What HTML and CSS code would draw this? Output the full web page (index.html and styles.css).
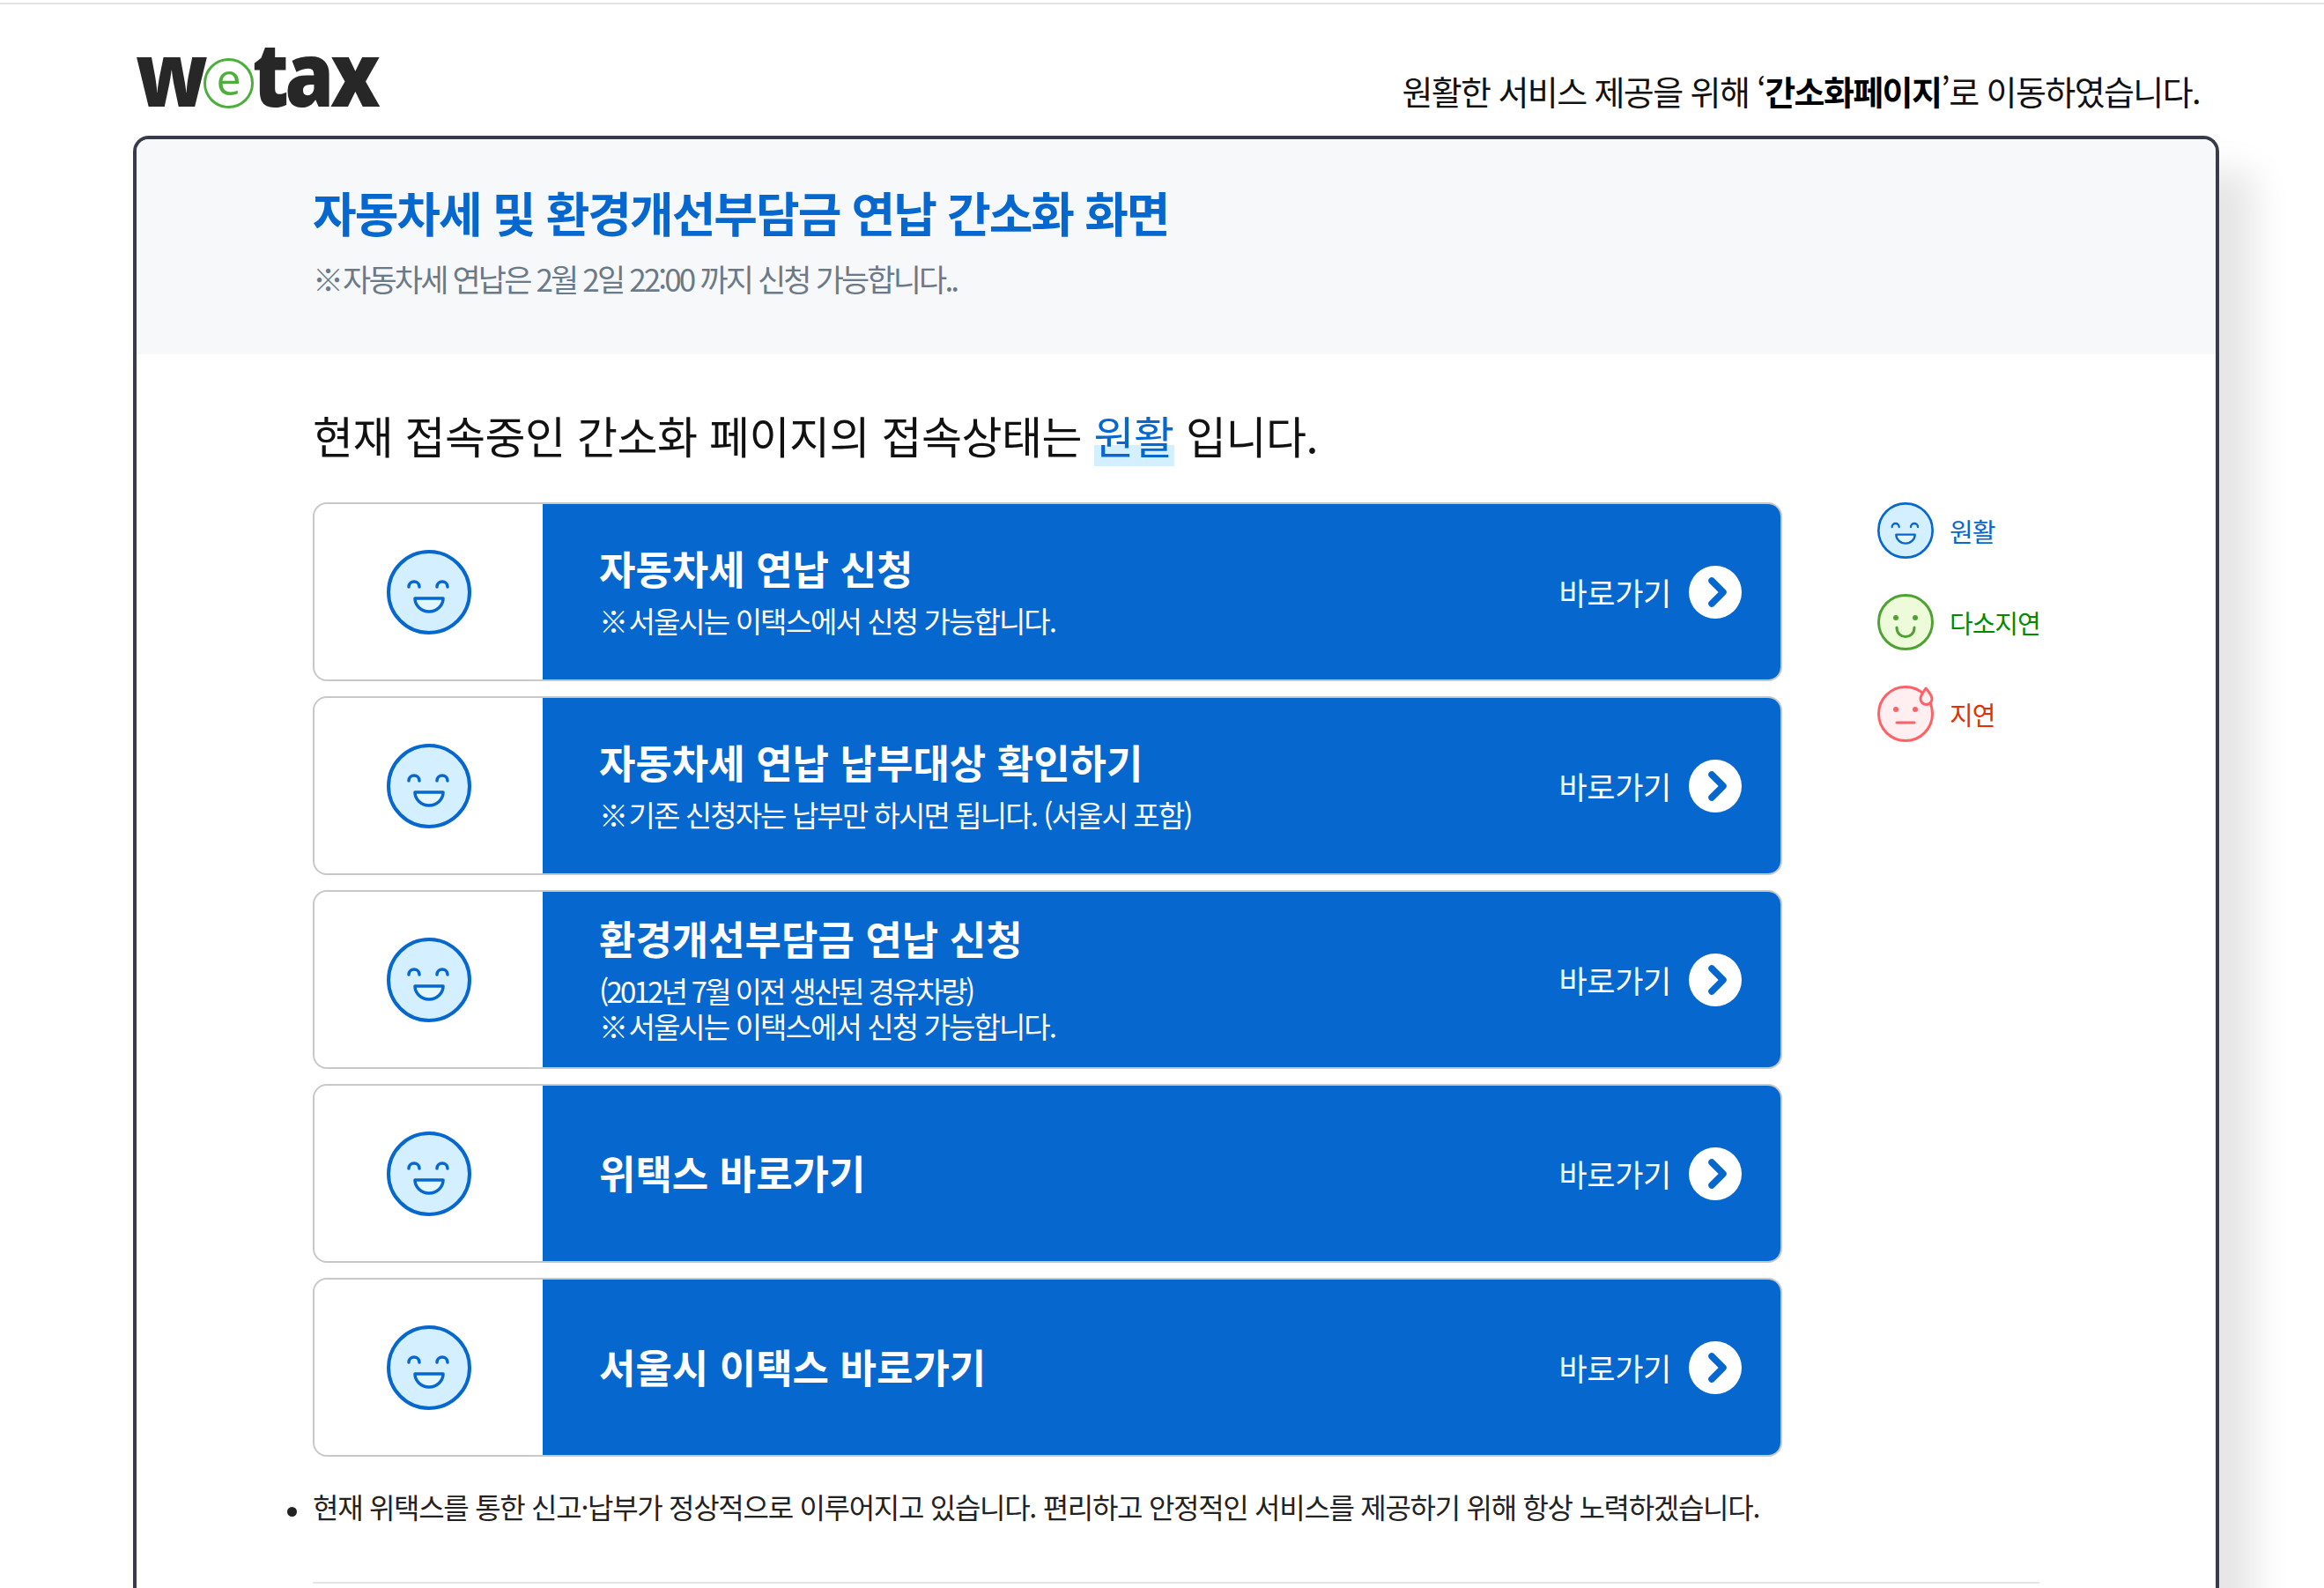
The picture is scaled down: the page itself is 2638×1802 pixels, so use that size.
FILE: index.html
```html
<!DOCTYPE html>
<html lang="ko">
<head>
<meta charset="utf-8">
<title>wetax</title>
<link rel="stylesheet" href="styles.css">
</head>
<body>
<div class="page">
  <header class="top">
    <div class="logo"><span class="logo-text">w</span><svg class="logo-e" viewBox="0 0 57 57"><circle cx="28.500" cy="28.500" r="27" fill="#fff" stroke="#4caf3c" stroke-width="3"/><text x="28.500" y="42" text-anchor="middle" class="logo-e-text">e</text></svg><span class="logo-text">tax</span></div>
    <p class="notice">원활한 서비스 제공을 위해 ‘<b>간소화페이지</b>’로 이동하였습니다.</p>
  </header>
  <main class="frame">
    <section class="head">
      <h1>자동차세 및 환경개선부담금 연납 간소화 화면</h1>
      <p><span class="mark">※</span> 자동차세 연납은 2월 2일 22:00 까지 신청 가능합니다..</p>
    </section>
    <section class="body">
      <h2>현재 접속중인 간소화 페이지의 접속상태는 <em>원활</em> 입니다.</h2>
      <div class="columns">
        <div class="rows">
          <a class="row">
            <span class="row-face"><svg class="face-lg"><use href="#good"/></svg></span>
            <span class="row-main">
              <span class="row-text"><strong>자동차세 연납 신청</strong><small><span class="mark">※</span> 서울시는 이택스에서 신청 가능합니다.</small></span>
              <span class="go">바로가기<svg class="arrow"><use href="#arrow"/></svg></span>
            </span>
          </a>
          <a class="row">
            <span class="row-face"><svg class="face-lg"><use href="#good"/></svg></span>
            <span class="row-main">
              <span class="row-text"><strong>자동차세 연납 납부대상 확인하기</strong><small><span class="mark">※</span> 기존 신청자는 납부만 하시면 됩니다. (서울시 포함)</small></span>
              <span class="go">바로가기<svg class="arrow"><use href="#arrow"/></svg></span>
            </span>
          </a>
          <a class="row">
            <span class="row-face"><svg class="face-lg"><use href="#good"/></svg></span>
            <span class="row-main">
              <span class="row-text"><strong>환경개선부담금 연납 신청</strong><small class="tight">(2012년 7월 이전 생산된 경유차량)</small><small><span class="mark">※</span> 서울시는 이택스에서 신청 가능합니다.</small></span>
              <span class="go">바로가기<svg class="arrow"><use href="#arrow"/></svg></span>
            </span>
          </a>
          <a class="row">
            <span class="row-face"><svg class="face-lg"><use href="#good"/></svg></span>
            <span class="row-main">
              <span class="row-text"><strong>위택스 바로가기</strong></span>
              <span class="go">바로가기<svg class="arrow"><use href="#arrow"/></svg></span>
            </span>
          </a>
          <a class="row">
            <span class="row-face"><svg class="face-lg"><use href="#good"/></svg></span>
            <span class="row-main">
              <span class="row-text"><strong>서울시 이택스 바로가기</strong></span>
              <span class="go">바로가기<svg class="arrow"><use href="#arrow"/></svg></span>
            </span>
          </a>
        </div>
        <ul class="legend">
          <li class="lg-good"><svg class="face-sm"><use href="#good"/></svg>원활</li>
          <li class="lg-mid"><svg class="face-sm"><use href="#mid"/></svg>다소지연</li>
          <li class="lg-bad"><svg class="face-sm"><use href="#bad"/></svg>지연</li>
        </ul>
      </div>
      <ul class="bullets">
        <li>현재 위택스를 통한 신고·납부가 정상적으로 이루어지고 있습니다. 편리하고 안정적인 서비스를 제공하기 위해 항상 노력하겠습니다.</li>
      </ul>
      <hr class="rule">
    </section>
  </main>
</div>
<svg class="defs" aria-hidden="true">
  <symbol id="good" viewBox="0 0 96 96">
    <circle cx="48" cy="48" r="46" fill="#d4efff" stroke="#0668cf" stroke-width="4"/>
    <path d="M25 42c0-8 12-8 12 0M57 42c0-8 12-8 12 0" fill="none" stroke="#0668cf" stroke-width="3.500" stroke-linecap="round"/>
    <path d="M32 55h32c0 8-7 15-16 15s-16-7-16-15z" fill="#e6f6ff" stroke="#0668cf" stroke-width="3.500" stroke-linejoin="round"/>
  </symbol>
  <symbol id="mid" viewBox="0 0 64 64">
    <circle cx="32" cy="32" r="30.500" fill="#edfbdb" stroke="#4ea233" stroke-width="3"/>
    <circle cx="21" cy="27" r="3" fill="#4ea233"/><circle cx="43" cy="27" r="3" fill="#4ea233"/>
    <path d="M22 38c0 14 20 14 20 0" fill="none" stroke="#4ea233" stroke-width="3" stroke-linecap="round"/>
  </symbol>
  <symbol id="bad" viewBox="0 0 64 64">
    <circle cx="32" cy="32" r="30.500" fill="#ffeff0" stroke="#ff6166" stroke-width="3"/>
    <circle cx="21" cy="27" r="3" fill="#ff6166"/><circle cx="43" cy="27" r="3" fill="#ff6166"/>
    <path d="M22 42h20" fill="none" stroke="#ff6166" stroke-width="3" stroke-linecap="round"/>
    <path d="M55 3c4 5 7 8 7 12a6.500 6.500 0 0 1-13 0c0-4 3-7 6-12z" fill="#ffeff0" stroke="#ff6166" stroke-width="3" stroke-linejoin="round"/>
  </symbol>
  <symbol id="arrow" viewBox="0 0 60 60">
    <circle cx="30" cy="30" r="30" fill="#fff"/>
    <path d="M26 17l13 13-13 13" fill="none" stroke="#0668cf" stroke-width="7.500" stroke-linecap="round" stroke-linejoin="round"/>
  </symbol>
</svg>
</body>
</html>
```
FILE: styles.css
```css
* { box-sizing: border-box; }
html, body { margin: 0; padding: 0; background: #fff; }
body {
  height: 1802px;
  overflow: hidden;
  font-family: "Noto Sans CJK KR", "Noto Sans", sans-serif;
  color: #111;
}
.page { border-top: 2px solid #e5e5e5; margin-top: 3px; padding: 0 119px 0 151px; }
.top { height: 149px; display: flex; justify-content: space-between; align-items: flex-start; }
.logo { display: flex; align-items: center; margin: 16px 0 0 3px; height: 130px; }
.logo-text { font-family: "Open Sans", sans-serif; font-weight: 800; font-size: 90px; line-height: 130px; letter-spacing: -4.500px; color: #272727; transform: scaleY(1.12); transform-origin: 0 100px; }
.logo-e { width: 57px; height: 57px; margin: 16px -2px 0 0; flex: none; }
.logo-e-text { font-family: "Open Sans", sans-serif; font-size: 50px; fill: #4caf3c; }
.notice { margin: 70px 22px 0 0; font-size: 38px; line-height: 56px; letter-spacing: -1.620px; color: #111; }
.notice b { font-weight: 700; color: #000; }
.frame {
  border: 4px solid #3a3b4a;
  border-bottom: 0;
  border-radius: 18px 18px 0 0;
  height: 1700px;
  background: #fff;
  box-shadow: 50px 30px 40px -10px rgba(0,0,0,.1);
}
.head { background: #f7f8fa; height: 244px; padding: 47px 0 0 200px; border-radius: 14px 14px 0 0; }
.head h1 { margin: 0; font-size: 54px; line-height: 72px; font-weight: 700; letter-spacing: -2px; color: #0668cf; }
.head p { margin: 14px 0 0; font-size: 35px; line-height: 50px; letter-spacing: -2.850px; color: #6b7a88; }
.mark { margin-right: -5px; }
.body { padding: 55px 200px 0 200px; }
.body h2 { margin: 0; font-size: 50px; line-height: 72px; font-weight: 400; letter-spacing: -.500px; color: #111; }
.body h2 em { font-style: normal; color: #0668cf; background: linear-gradient(transparent 66%, #d4efff 66%); }
.columns { display: flex; justify-content: space-between; margin-top: 41px; }
.rows { width: 1668px; display: flex; flex-direction: column; gap: 17px; }
.row { height: 203px; display: flex; border: 2px solid #c8c8c8; border-radius: 16px; overflow: hidden; }
.row-face { width: 259px; flex: none; display: flex; align-items: center; justify-content: center; }
.face-lg { width: 96px; height: 96px; }
.row-main { flex: 1; background: #0668cf; color: #fff; display: flex; align-items: center; justify-content: space-between; padding: 0 44px 0 64px; }
.row-text { display: flex; flex-direction: column; padding-bottom: 2px; }
.row-text strong { font-size: 45px; line-height: 66px; font-weight: 700; letter-spacing: 0; }
.row-text small { font-size: 33px; line-height: 40px; letter-spacing: -1.900px; }
.row-text small.tight { letter-spacing: -2.750px; }
.row-text strong + small { margin-top: 6px; }
.row-text small:last-child { margin-bottom: 5px; }
.go { display: flex; align-items: center; gap: 20px; font-size: 35px; letter-spacing: -.300px; }
.arrow { width: 60px; height: 60px; }
.legend { list-style: none; margin: 0; padding: 0; width: 184px; display: flex; flex-direction: column; gap: 40px; }
.legend li { display: flex; align-items: center; gap: 18px; font-size: 29px; height: 64px; letter-spacing: -1px; white-space: nowrap; }
.face-sm { width: 64px; height: 64px; flex: none; }
.lg-good { color: #0668cf; }
.lg-mid { color: #008a00; }
.lg-bad { color: #e62e00; }
.bullets { margin: 33px 0 0; padding: 0; list-style: none; }
.bullets li { position: relative; font-size: 32px; line-height: 46px; letter-spacing: -1.300px; color: #222; }
.bullets li::before { content: ""; position: absolute; left: -29px; top: 24px; width: 11px; height: 11px; border-radius: 50%; background: #222; }
.rule { border: 0; border-top: 2px solid #e5e5e5; margin: 63px 0 0; }
.defs { position: absolute; width: 0; height: 0; }
```
